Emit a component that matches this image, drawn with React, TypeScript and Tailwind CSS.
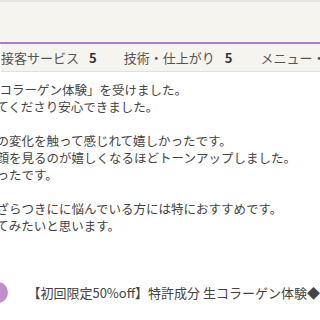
export default function App() {
  const font = { fontFamily: '"Noto Sans CJK JP", "Noto Sans", sans-serif' };
  return (
    <div className="w-[320px] h-[320px] overflow-hidden bg-white text-[#444]" style={font}>
      <div className="h-[2px] bg-[#e4e4e4]" />
      <div className="h-[40px] bg-[#f6f4ee]" />
      <div className="h-[2px] bg-[#a47fd2]" />
      <div className="h-[28px] bg-[#f6f4ee] border-b border-[#e0e0e0] flex items-center whitespace-nowrap text-[13px] text-[#555] ml-[1px]">
        <span>接客サービス</span>
        <span className="ml-[10px] font-bold text-[#333]">5</span>
        <span className="ml-[12px] w-px h-[21px] bg-[#999]" />
        <span className="ml-[15px]">技術・仕上がり</span>
        <span className="ml-[10px] font-bold text-[#333]">5</span>
        <span className="ml-[12px] w-px h-[21px] bg-[#999]" />
        <span className="ml-[16px]">メニュー・料金</span>
      </div>
      <div className="ml-[-16px] mt-[9px] text-[12.5px] leading-[17px] whitespace-nowrap text-[#444]">
        <div className="ml-[3px]">生コラーゲン体験」を受けました。</div>
        <div>してくださり安心できました。</div>
        <div>&nbsp;</div>
        <div>肌の変化を触って感じれて嬉しかったです。</div>
        <div>朝顔を見るのが嬉しくなるほどトーンアップしました。</div>
        <div>かったです。</div>
        <div>&nbsp;</div>
        <div>肌ざらつきにに悩んでいる方には特におすすめです。</div>
        <div>してみたいと思います。</div>
      </div>
      <div className="mt-[48px] flex items-center whitespace-nowrap">
        <div className="w-[30px] h-[21px] rounded-full bg-[#bf8fca] ml-[-17px]" />
        <span className="ml-[19px] text-[13px] text-[#444]">【初回限定50%off】特許成分 生コラーゲン体験◆</span>
      </div>
    </div>
  );
}
